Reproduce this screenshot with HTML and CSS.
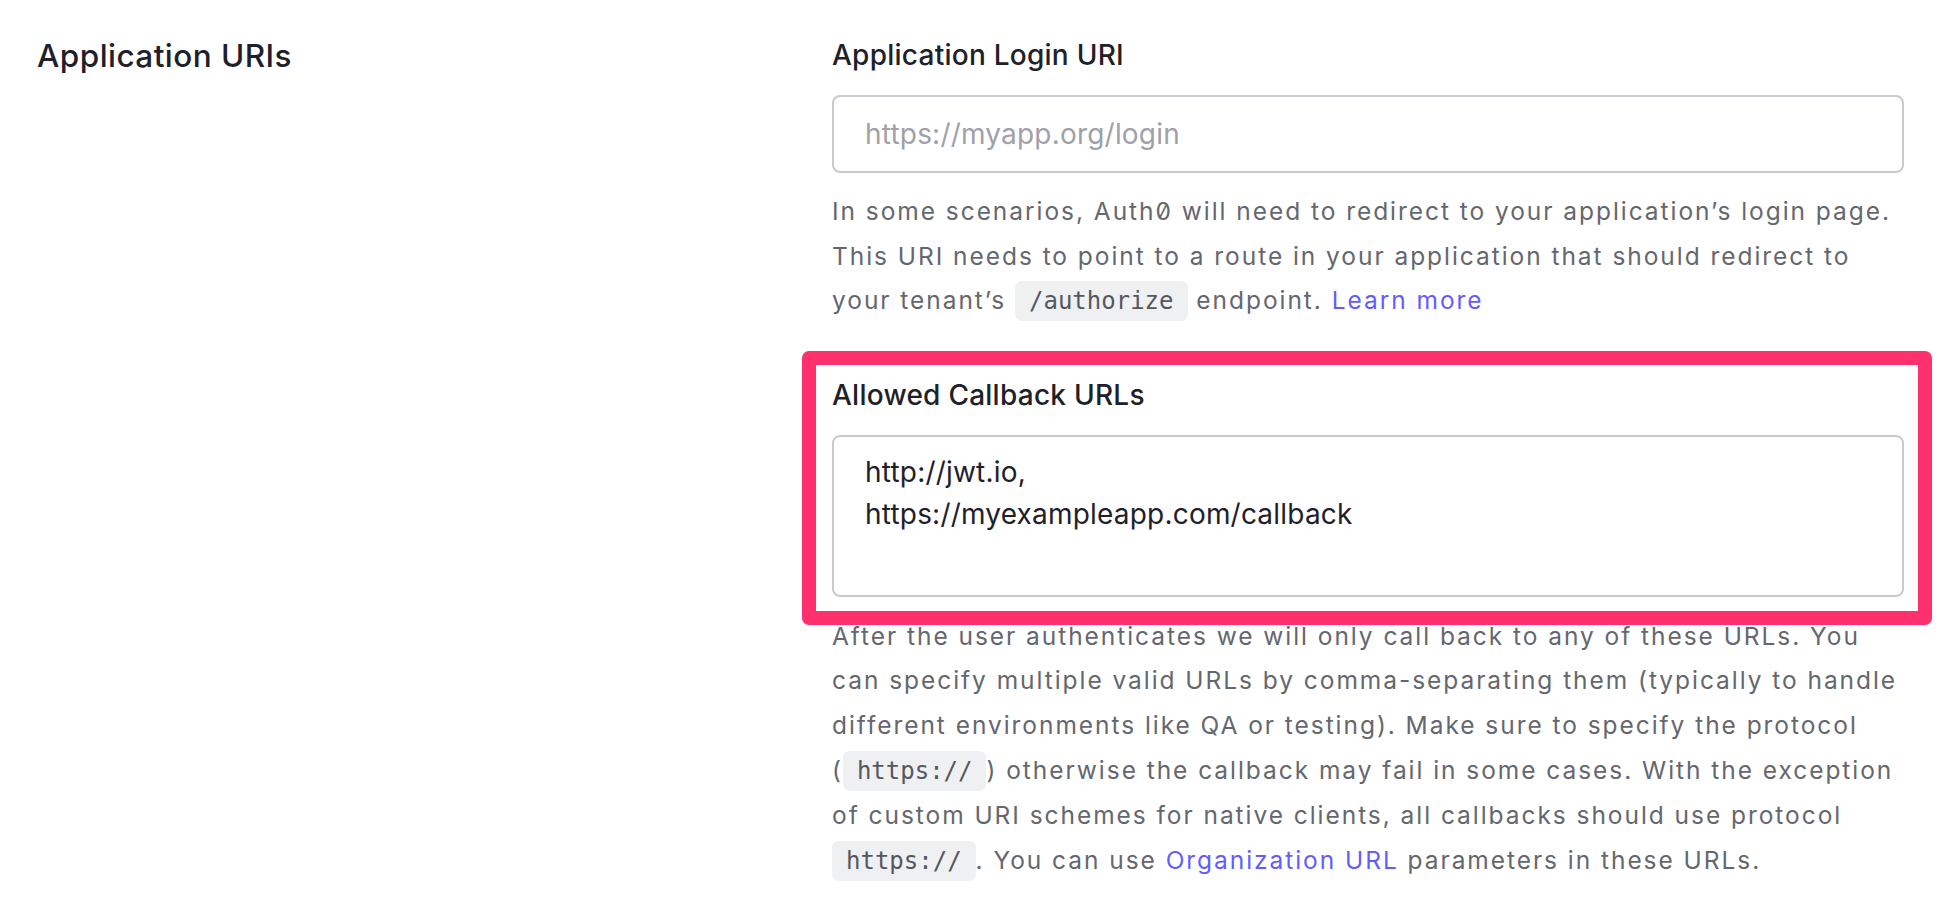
FILE: index.html
```html
<!DOCTYPE html>
<html lang="en">
<head>
<meta charset="utf-8">
<title>Application URIs</title>
<link rel="stylesheet" href="styles.css">
</head>
<body>
<section class="section">
  <h2 class="section-title">Application URIs</h2>
  <div class="fields">
    <div class="field">
      <label class="label" for="login-uri">Application Login URI</label>
      <input class="input" id="login-uri" type="text" placeholder="https://myapp.org/login">
      <p class="help">In some scenarios, <span class="zero">Auth0</span> will need to redirect to your application’s login page. This URI needs to point to a route in your application that should redirect to your tenant’s <code class="chip">/authorize</code> endpoint. <a class="link" href="#">Learn more</a></p>
    </div>
    <div class="field field-second">
      <div class="field-main">
        <label class="label" for="callbacks">Allowed Callback URLs</label>
        <textarea class="textarea" id="callbacks">http://jwt.io,
https://myexampleapp.com/callback</textarea>
        <div class="highlight"></div>
      </div>
      <p class="help help-after">After the user authenticates we will only call back to any of these URLs. You can specify multiple valid URLs by comma-separating them (typically to handle different environments like QA or testing). Make sure to specify the protocol (<code class="chip">https://</code>) otherwise the callback may fail in some cases. With the exception of custom URI schemes for native clients, all callbacks should use protocol <code class="chip">https://</code>. You can use <a class="link" href="#">Organization URL</a> parameters in these URLs.</p>
    </div>
  </div>
</section>
</body>
</html>
```

FILE: styles.css
```css
html, body {
  margin: 0;
  padding: 0;
  background: #ffffff;
}

body {
  font-family: Inter, "Noto Sans", "Liberation Sans", sans-serif;
  color: #1e212a;
}

.section {
  display: grid;
  grid-template-columns: 795px 1072px;
  padding: 34px 0 0 37px;
}

.section-title {
  margin: 0;
  font-size: 31.5px;
  line-height: 44px;
  font-weight: 500;
  letter-spacing: 0.45px;
  color: #1e212a;
}

.fields {
  display: flex;
  flex-direction: column;
}

.field {
  display: flex;
  flex-direction: column;
}

.field-second {
  margin-top: 50px;
}

.field-main {
  position: relative;
  display: flex;
  flex-direction: column;
}

.label {
  display: block;
  font-size: 28px;
  line-height: 42px;
  font-weight: 500;
  letter-spacing: 0.25px;
  color: #1e212a;
  margin-bottom: 19px;
}

.input,
.textarea {
  box-sizing: border-box;
  width: 100%;
  margin: 0;
  font-family: inherit;
  font-size: 28px;
  letter-spacing: 0.2px;
  color: #1e212a;
  background: #ffffff;
  border: 2px solid #c9cacf;
  border-radius: 8px;
  outline: none;
}

.input {
  height: 78px;
  padding: 0 31px;
}

.input::placeholder {
  color: #a0a1a8;
  opacity: 1;
}

.textarea {
  height: 162px;
  padding: 14px 31px;
  line-height: 42px;
  resize: none;
  overflow: hidden;
  display: block;
}

.help {
  margin: 16px 0 0;
  font-size: 24.5px;
  line-height: 44.6px;
  letter-spacing: 1.95px;
  color: #65676e;
}

.help-after {
  margin-top: 17px;
}

.zero {
  font-feature-settings: "zero" 1;
}

.chip {
  display: inline;
  white-space: nowrap;
  font-family: "DejaVu Sans Mono", "Liberation Mono", monospace;
  font-size: 24px;
  letter-spacing: 0;
  padding: 6px 14px;
  border-radius: 7px;
  background: #eff0f2;
  color: #55575e;
}

.link {
  color: #635dff;
  text-decoration: none;
}

.highlight {
  position: absolute;
  top: -23px;
  left: -30px;
  right: -28px;
  bottom: -28px;
  border: 14px solid #ff306e;
  border-radius: 7px;
  pointer-events: none;
}
```
